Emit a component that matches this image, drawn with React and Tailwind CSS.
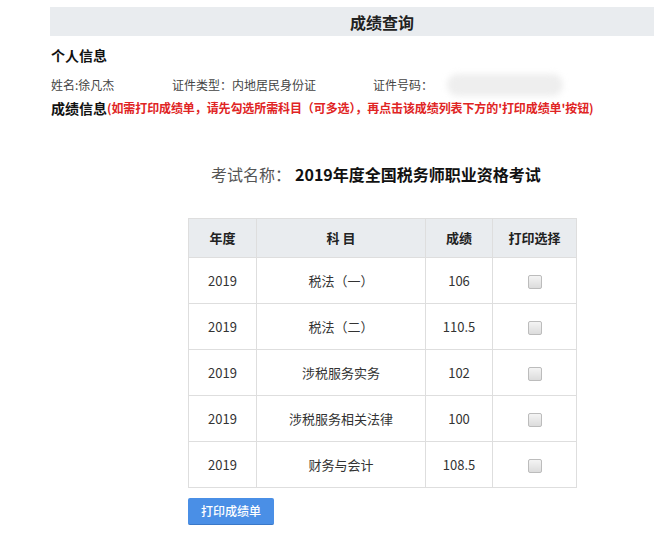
const rows = [
  { year: '2019', subject: '税法（一）', score: '106' },
  { year: '2019', subject: '税法（二）', score: '110.5' },
  { year: '2019', subject: '涉税服务实务', score: '102' },
  { year: '2019', subject: '涉税服务相关法律', score: '100' },
  { year: '2019', subject: '财务与会计', score: '108.5' },
]

const font = { fontFamily: '"Noto Sans CJK SC", "Noto Sans", Roboto, sans-serif' }

function Checkbox() {
  return (
    <span className="inline-block w-[14px] h-[14px] mt-[8px] rounded-[2px] border border-[#bcbcbc] bg-gradient-to-b from-[#f4f4f4] to-[#dcdcdc]" />
  )
}

export default function App() {
  return (
    <div className="w-[654px] h-[540px] bg-white overflow-hidden text-[#333]" style={font}>
      <div className="pt-[7px]">
        <div className="ml-[50px] h-[29px] bg-[#e9ecef] flex items-center pl-[300px]">
          <span className="text-[16px] font-bold text-[#222] leading-none">成绩查询</span>
        </div>
      </div>

      <div className="pl-[51px]">
        <div className="mt-[9px] h-[20px] leading-[20px] text-[14px] font-bold text-[#111]">个人信息</div>

        <div className="mt-[10px] h-[20px] flex items-center text-[12px] text-[#444]">
          <span className="w-[121px]">姓名:徐凡杰</span>
          <span className="w-[201px]">证件类型：内地居民身份证</span>
          <span>证件号码：</span>
          <span className="ml-[14px] w-[116px] h-[22px] rounded-full bg-[#eeeeee] blur-[3px]" />
        </div>

        <div className="mt-[3px] h-[20px] flex items-center whitespace-nowrap">
          <span className="text-[14px] font-bold text-[#111]">成绩信息</span>
          <span className="text-[12px] font-bold text-[#e02424] tracking-[-0.1px]">(如需打印成绩单，请先勾选所需科目（可多选），再点击该成绩列表下方的'打印成绩单'按钮)</span>
        </div>
      </div>

      <div className="mt-[44px] pl-[211px] h-[24px] flex items-center text-[16px]">
        <span className="text-[#555] w-[84px]">考试名称：</span>
        <span className="font-bold text-[#111]">2019年度全国税务师职业资格考试</span>
      </div>

      <div className="ml-[188px] mt-[32px]">
        <table className="border-collapse text-center text-[13px] text-[#333]">
          <thead>
            <tr className="bg-[#e9ecef] h-[39px]">
              <th className="w-[68px] border border-[#dedede] font-bold text-[#222]">年度</th>
              <th className="w-[169px] border border-[#dedede] font-bold text-[#222]">科 目</th>
              <th className="w-[67px] border border-[#dedede] font-bold text-[#222]">成绩</th>
              <th className="w-[84px] border border-[#dedede] font-bold text-[#222]">打印选择</th>
            </tr>
          </thead>
          <tbody>
            {rows.map((r) => (
              <tr key={r.subject} className="h-[46px]">
                <td className="border border-[#dedede]">{r.year}</td>
                <td className="border border-[#dedede]">{r.subject}</td>
                <td className="border border-[#dedede]">{r.score}</td>
                <td className="border border-[#dedede]"><Checkbox /></td>
              </tr>
            ))}
          </tbody>
        </table>

        <button className="mt-[10px] w-[86px] h-[27px] rounded-[2px] bg-[#4a8fe6] border-b border-[#3a78c8] text-white text-[12px] font-medium">
          打印成绩单
        </button>
      </div>
    </div>
  )
}
